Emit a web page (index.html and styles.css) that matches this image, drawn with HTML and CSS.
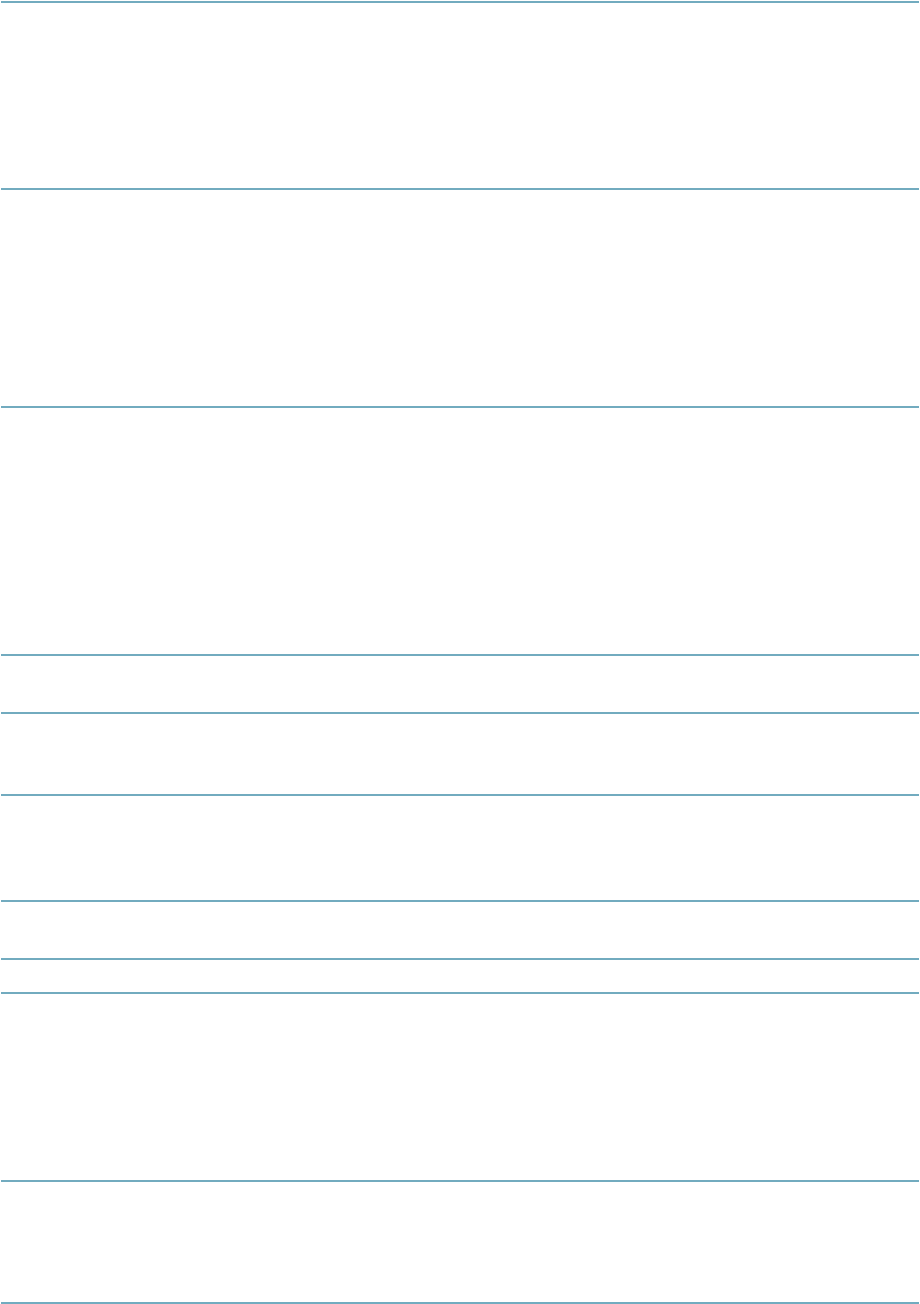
FILE: index.html
```html
<!DOCTYPE html>
<html lang="en">
<head>
<meta charset="utf-8">
<title>Sections</title>
<link rel="stylesheet" href="styles.css">
</head>
<body>
<main class="page">
  <section class="band h187"></section>
  <section class="band h218"></section>
  <section class="band h248"></section>
  <section class="band h58"></section>
  <section class="band h82"></section>
  <section class="band h106"></section>
  <section class="band h58"></section>
  <section class="band h34"></section>
  <section class="band h188"></section>
  <section class="band h122"></section>
  <div class="band end"></div>
</main>
</body>
</html>
```
FILE: styles.css
```css
html, body {
  margin: 0;
  padding: 0;
  background: #ffffff;
  font-family: "Liberation Sans", Arial, sans-serif;
}
.page {
  display: flex;
  flex-direction: column;
  padding: 1px 1px 0 1px;
}
.band {
  box-sizing: border-box;
  border-top: 2px solid #72abbf;
}
.h187 { height: 187px; }
.h218 { height: 218px; }
.h248 { height: 248px; }
.h58 { height: 58px; }
.h82 { height: 82px; }
.h106 { height: 106px; }
.h34 { height: 34px; }
.h188 { height: 188px; }
.h122 { height: 122px; }
.end { height: 2px; }
```
